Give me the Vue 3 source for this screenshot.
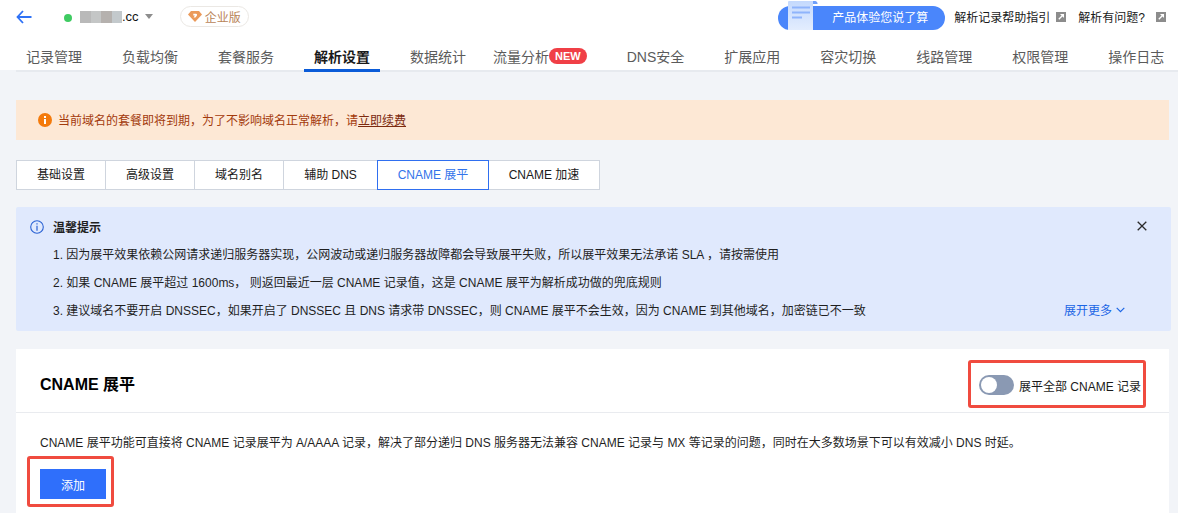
<script setup>
const tabs = [
  { label: '记录管理' }, { label: '负载均衡' }, { label: '套餐服务' }, { label: '解析设置', active: true },
  { label: '数据统计' }, { label: '流量分析', badge: 'NEW' }, { label: 'DNS安全' }, { label: '扩展应用' },
  { label: '容灾切换' }, { label: '线路管理' }, { label: '权限管理' }, { label: '操作日志' }
]
const subTabs = ['基础设置', '高级设置', '域名别名', '辅助 DNS', 'CNAME 展平', 'CNAME 加速']
const tips = [
  '1. 因为展平效果依赖公网请求递归服务器实现，公网波动或递归服务器故障都会导致展平失败，所以展平效果无法承诺 SLA ，请按需使用',
  '2. 如果 CNAME 展平超过 1600ms， 则返回最近一层 CNAME 记录值，这是 CNAME 展平为解析成功做的兜底规则',
  '3. 建议域名不要开启 DNSSEC，如果开启了 DNSSEC 且 DNS 请求带 DNSSEC，则 CNAME 展平不会生效，因为 CNAME 到其他域名，加密链已不一致'
]
const blur = ['#b9b9b9', '#c4c6c6', '#b5b1ae', '#c3c9cc']
</script>

<template>
  <div class="page">
    <header class="header">
      <div class="top">
        <svg class="back" width="16" height="14" viewBox="0 0 16 14"><path d="M7 1 1.500 7 7 13M2 7h13.500" fill="none" stroke="#2f72f6" stroke-width="1.800"/></svg>
        <span class="dot"></span>
        <span class="mask"><i v-for="c in blur" :key="c" :style="{ background: c }"></i></span>
        <span class="domain">.cc</span>
        <span class="caret"></span>
        <span class="edition">
          <svg width="14" height="11" viewBox="0 0 14 11"><path d="M3 0h8l3 3.500L7 11 0 3.500z" fill="#eb9a5a"/><path d="M5.300 2.800h2.600c1.200 0 1.400 1 .9 1.900L7.400 6.500H5.600l1.300-2H5.300z" fill="#fff"/></svg>
          企业版
        </span>
        <div class="spacer"></div>
        <div class="pill">
          <svg class="scroll" width="30" height="29" viewBox="0 0 30 29">
            <defs><linearGradient id="paper" x1="0" y1="0" x2="0" y2="1"><stop offset="0" stop-color="#c4d9fd"/><stop offset="1" stop-color="#e3edfe"/></linearGradient></defs>
            <path d="M0 1a1 1 0 0 1 1-1h24v29H0z" fill="url(#paper)"/>
            <path d="M25 0h2a2.500 2.500 0 0 1 2.500 3H25z" fill="#6f9ffa"/>
            <path d="M4 5.500h18v2H4zM4 10.500h18v2H4zM4 15.500h10v2H4z" fill="#8fb4fb"/>
          </svg>
          <span>产品体验您说了算</span>
        </div>
        <a class="link first">解析记录帮助指引
          <svg width="10" height="10" viewBox="0 0 10 10"><path d="M0 0h10v10H0z" fill="#8c8c8c"/><path d="M2.800 7.200 7 3" stroke="#fff" stroke-width="1.300"/><path d="M4 2h4v4L6.800 4.800 5.200 3.200z" fill="#fff"/></svg>
        </a>
        <a class="link second">解析有问题?
          <svg width="10" height="10" viewBox="0 0 10 10"><path d="M0 0h10v10H0z" fill="#8c8c8c"/><path d="M2.800 7.200 7 3" stroke="#fff" stroke-width="1.300"/><path d="M4 2h4v4L6.800 4.800 5.200 3.200z" fill="#fff"/></svg>
        </a>
      </div>
      <nav class="tabs">
        <a v-for="t in tabs" :key="t.label" class="tab" :class="{ active: t.active, badged: t.badge }">
          {{ t.label }}<b v-if="t.badge" class="badge">{{ t.badge }}</b>
        </a>
      </nav>
    </header>
    <div class="rule"></div>

    <main class="main">
      <div class="warn">
        <svg width="14" height="14" viewBox="0 0 14 14"><circle cx="7" cy="7" r="7" fill="#f47a0b"/><path d="M6 3h2v2H6zM6 6h2v5H6z" fill="#fff"/></svg>
        <span>当前域名的套餐即将到期，为了不影响域名正常解析，请<u>立即续费</u></span>
      </div>

      <div class="subtabs">
        <a v-for="(s, i) in subTabs" :key="s" class="subtab" :class="{ on: i === 4 }">{{ s }}</a>
      </div>

      <section class="tip">
        <svg class="tip-icon" width="14" height="14" viewBox="0 0 14 14"><circle cx="7" cy="7" r="6.300" fill="none" stroke="#2a62d4" stroke-width="1.100"/><path d="M6.400 3.200h1.200v1.300H6.400zM6.400 5.800h1.200v5H6.400z" fill="#2a62d4"/></svg>
        <div class="tip-body">
          <h4>温馨提示</h4>
          <p v-for="t in tips" :key="t">{{ t }}</p>
        </div>
        <svg class="close" width="10" height="10" viewBox="0 0 10 10"><path d="M.7.700l8.600 8.600M9.300.700.700 9.300" stroke="#2b2b2b" stroke-width="1.300"/></svg>
        <a class="more">展开更多
          <svg width="9" height="6" viewBox="0 0 9 6"><path d="M.7.800 4.500 4.600 8.300.800" fill="none" stroke="#1c66e5" stroke-width="1.200"/></svg>
        </a>
      </section>

      <section class="card">
        <div class="card-head">
          <h3>CNAME 展平</h3>
          <div class="switch-wrap">
            <span class="switch"><i></i></span>
            <span>展平全部 CNAME 记录</span>
          </div>
        </div>
        <div class="card-body">
          <p>CNAME 展平功能可直接将 CNAME 记录展平为 A/AAAA 记录，解决了部分递归 DNS 服务器无法兼容 CNAME 记录与 MX 等记录的问题，同时在大多数场景下可以有效减小 DNS 时延。</p>
          <button class="add">添加</button>
        </div>
      </section>
    </main>
  </div>
</template>

<style scoped>
.page {
  width: 1178px;
  height: 513px;
  overflow: hidden;
  background: #f2f4f8;
  font-family: "Liberation Sans", "Noto Sans CJK SC", sans-serif;
  font-size: 12px;
  color: #000;
}
.header {
  height: 70px;
  background: #fff;
}
.rule {
  height: 2px;
  margin-left: 16px;
  background: #e7eaef;
}
.top {
  height: 35px;
  display: flex;
  align-items: center;
}
.back { margin-left: 16px; margin-bottom: 2px; }
.dot {
  width: 8px;
  height: 8px;
  margin-left: 32px;
  border-radius: 50%;
  background: #3fcb62;
}
.mask { display: flex; margin-left: 8px; height: 12px; margin-bottom: 2px; }
.mask i { width: 10.500px; height: 12px; }
.domain { font-size: 13px; color: #111; margin-bottom: 2px; }
.caret {
  margin-left: 6px;
  margin-bottom: 2px;
  border-left: 4px solid transparent;
  border-right: 4px solid transparent;
  border-top: 5px solid #8d8d8d;
}
.edition {
  display: flex;
  align-items: center;
  gap: 3px;
  height: 21px;
  margin-left: 27px;
  margin-bottom: 2px;
  padding: 0 7px;
  box-sizing: border-box;
  border: 1px solid #ebe8e4;
  border-radius: 11px;
  color: #b98458;
  font-size: 12px;
}
.spacer { flex: 1; }
.pill {
  position: relative;
  width: 167px;
  height: 24px;
  margin-bottom: -1px;
  background: #4a86fb;
  border-radius: 12px;
  color: #fff;
  font-size: 12px;
  line-height: 24px;
}
.pill span { position: relative; margin-left: 54px; }
.scroll { position: absolute; left: 10px; top: -5px; }
.link {
  display: flex;
  align-items: center;
  gap: 6px;
  color: #1a1a1a;
  margin-bottom: 2px;
}
.first { margin-left: 9px; }
.second { margin-left: 12px; margin-right: 12px; gap: 11px; }
.tabs {
  height: 35px;
  display: flex;
  padding-left: 16px;
}
.tab {
  position: relative;
  display: flex;
  align-items: center;
  height: 35px;
  padding: 6px 10px 0;
  margin-right: 20px;
  font-size: 14px;
  color: #5b5b5b;
  white-space: nowrap;
  box-sizing: border-box;
}
.tab.badged { margin-left: -13px; }
.tab.active {
  color: #1a1a1a;
  font-weight: 700;
  border-bottom: 3px solid #0a5bd8;
  height: 37px;
  padding-top: 7px;
  margin-bottom: -2px;
}
.badge {
  display: inline-block;
  height: 16px;
  line-height: 16px;
  padding: 0 6px;
  border-radius: 8px;
  background: #f03f46;
  color: #fff;
  font-size: 11px;
  font-weight: 700;
}
.main { padding: 28px 9px 0 16px; }
.warn {
  display: flex;
  align-items: center;
  gap: 6px;
  height: 40px;
  padding: 0 0 1px 22px;
  box-sizing: border-box;
  background: #fde8d5;
  color: #a33a0c;
  font-size: 12px;
}
.warn u { color: #7c2a10; }
.subtabs {
  display: flex;
  margin-top: 20px;
  height: 30px;
}
.subtab {
  display: flex;
  align-items: center;
  justify-content: center;
  width: 90px;
  height: 30px;
  padding-bottom: 3px;
  box-sizing: border-box;
  background: #fff;
  border: 1px solid #cfd5de;
  margin-left: -1px;
  color: #1a1a1a;
}
.subtab:first-child { margin-left: 0; }
.subtab:nth-child(4) { width: 95px; }
.subtab:nth-child(5),
.subtab:nth-child(6) { width: 112px; }
.subtab.on {
  position: relative;
  z-index: 1;
  border-color: #2f6ff0;
  color: #3274ea;
}
.tip {
  position: relative;
  display: flex;
  height: 124px;
  margin: 17px -2px 0 0;
  padding: 13px 0 0 14px;
  box-sizing: border-box;
  background: #e0e9fd;
  border-radius: 2px;
}
.tip-icon { flex: none; }
.tip-body { margin-left: 9px; color: #1f1f1f; }
.tip-body h4 {
  margin: 0 0 5px;
  font-size: 12px;
  line-height: 16px;
  font-weight: 700;
}
.tip-body p {
  margin: 0;
  font-size: 12px;
  line-height: 28px;
  white-space: nowrap;
}
.close { position: absolute; right: 24px; top: 14px; }
.more {
  position: absolute;
  right: 46px;
  top: 94px;
  display: flex;
  align-items: center;
  gap: 4px;
  color: #1c66e5;
}
.card {
  margin-top: 18px;
  width: 1153px;
  height: 200px;
  background: #fff;
}
.card-head {
  display: flex;
  align-items: center;
  justify-content: space-between;
  height: 64px;
  padding: 4px 28px 0 24px;
  box-sizing: border-box;
  border-bottom: 1px solid #e9ebef;
}
.card-head h3 {
  margin: 0;
  font-size: 16px;
  font-weight: 700;
  color: #000;
}
.switch-wrap {
  position: relative;
  display: flex;
  align-items: center;
  gap: 5px;
  margin-top: 5px;
  font-size: 12px;
  color: #1a1a1a;
}
.switch-wrap::after {
  content: "";
  position: absolute;
  left: -11px;
  right: -5px;
  top: -15px;
  bottom: -13px;
  border: 3px solid #f04b3f;
  border-radius: 3px;
}
.switch {
  width: 35px;
  height: 20px;
  border-radius: 10px;
  background: #8a99b3;
  position: relative;
}
.switch i {
  position: absolute;
  left: 2px;
  top: 2px;
  width: 16px;
  height: 16px;
  border-radius: 50%;
  background: #fff;
}
.card-body { padding: 21px 24px 0; }
.card-body p {
  margin: 0;
  font-size: 12px;
  line-height: 18px;
  color: #1f1f1f;
  white-space: nowrap;
}
.add {
  position: relative;
  display: block;
  width: 66px;
  height: 30px;
  margin-top: 17px;
  border: 0;
  border-radius: 0;
  background: #2f6ffb;
  color: #fff;
  font: 12px "Liberation Sans", "Noto Sans CJK SC", sans-serif;
}
.add::after {
  content: "";
  position: absolute;
  left: -13px;
  right: -8px;
  top: -13px;
  bottom: -8px;
  border: 3px solid #f04b3f;
  border-radius: 3px;
}
</style>
